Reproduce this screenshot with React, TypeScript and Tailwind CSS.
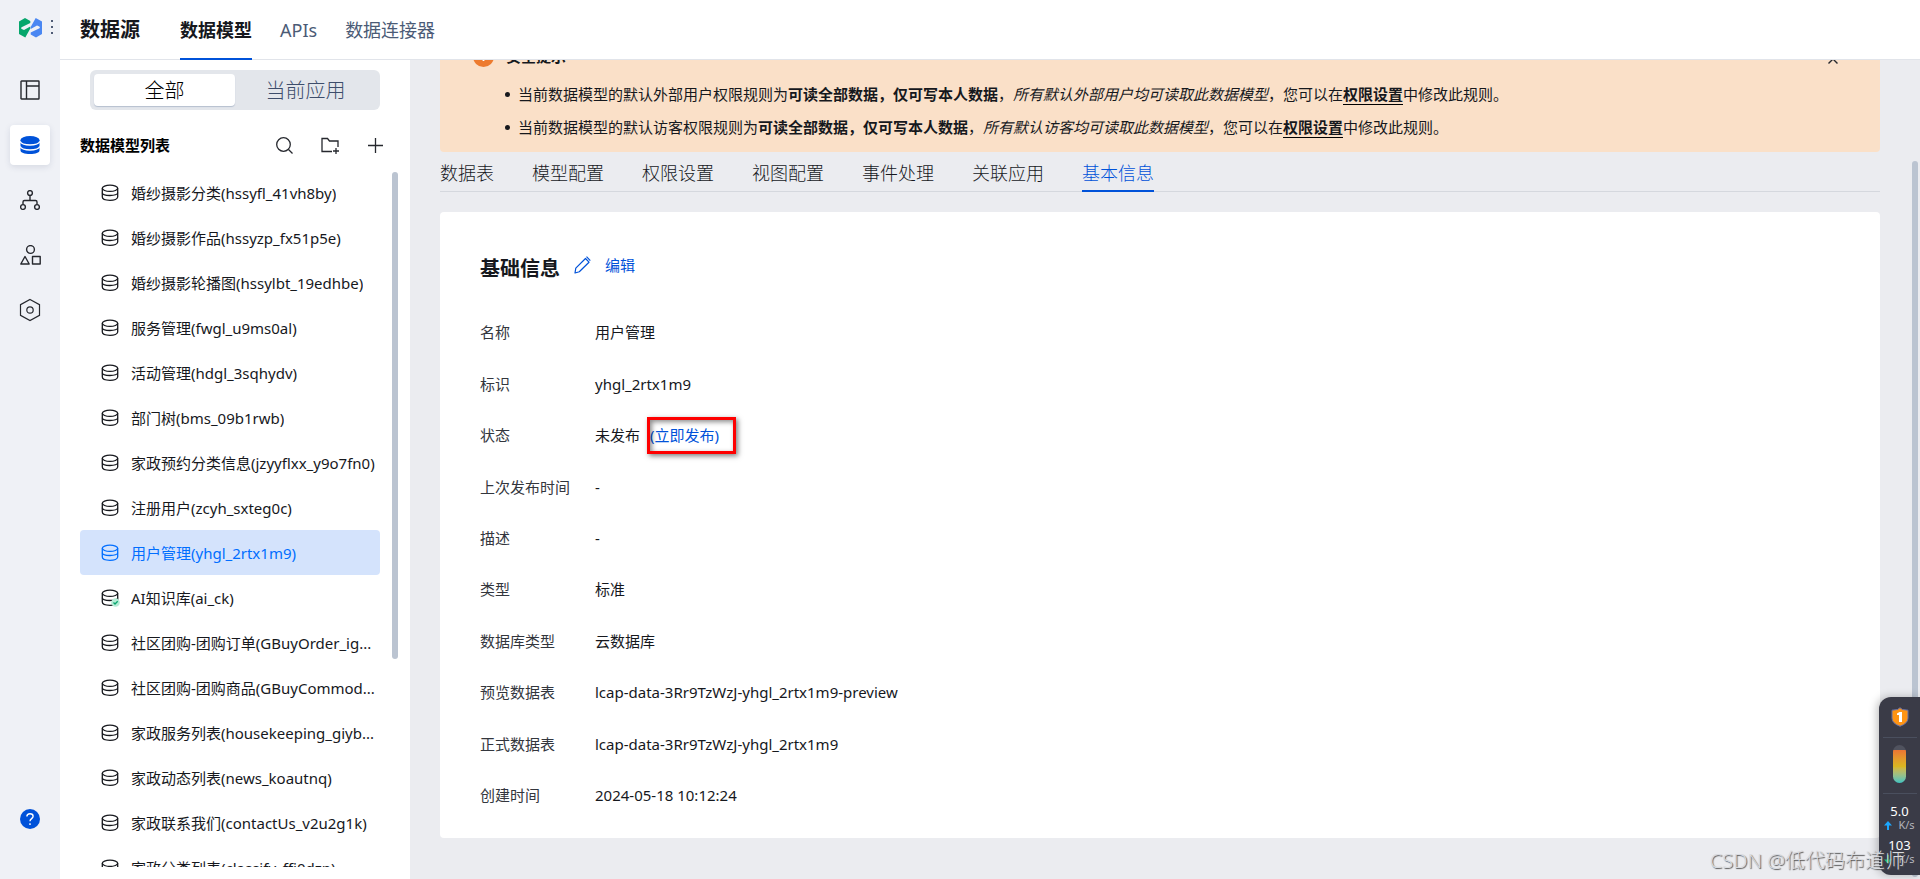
import { useState } from "react";
import type { ReactNode } from "react";
import clsx from "clsx";

type Model = { name: string; published?: boolean };

const models: Model[] = [
  { name: "婚纱摄影分类(hssyfl_41vh8by)" },
  { name: "婚纱摄影作品(hssyzp_fx51p5e)" },
  { name: "婚纱摄影轮播图(hssylbt_19edhbe)" },
  { name: "服务管理(fwgl_u9ms0al)" },
  { name: "活动管理(hdgl_3sqhydv)" },
  { name: "部门树(bms_09b1rwb)" },
  { name: "家政预约分类信息(jzyyflxx_y9o7fn0)" },
  { name: "注册用户(zcyh_sxteg0c)" },
  { name: "用户管理(yhgl_2rtx1m9)" },
  { name: "AI知识库(ai_ck)", published: true },
  { name: "社区团购-团购订单(GBuyOrder_ig..." },
  { name: "社区团购-团购商品(GBuyCommod..." },
  { name: "家政服务列表(housekeeping_giyb..." },
  { name: "家政动态列表(news_koautnq)" },
  { name: "家政联系我们(contactUs_v2u2g1k)" },
  { name: "家政分类列表(classify_ffi0dzn)" },
];

const topTabs = ["数据模型", "APIs", "数据连接器"];
const detailTabs = ["数据表", "模型配置", "权限设置", "视图配置", "事件处理", "关联应用", "基本信息"];

function Logo() {
  return (
    <svg width="24" height="20" viewBox="0 0 24 20">
      <path d="M0 3.500L6 0l5.300 3v2L2.500 9.300q-1 .9.200 1.700L5 12l6.300-3.500v2L6.300 19.500 0 16z" fill="#06a66c" />
      <path d="M23 16l-6 3.500-5.300-3v-2l8.800-4.300q1-.9-.2-1.700L18 7.500 11.700 11V9l5-9L23 3.500z" fill="#4a87f2" />
    </svg>
  );
}

function DatabaseIcon({ published }: { published?: boolean }) {
  return (
    <svg width="19" height="18" viewBox="0 0 19 18" className="shrink-0" fill="none" stroke="currentColor" strokeWidth="1.300">
      <ellipse cx="9" cy="4.300" rx="7.700" ry="3.100" />
      <path d="M1.300 4.300v8.800c0 1.800 3.400 3.200 7.700 3.200s7.700-1.400 7.700-3.200V4.300" />
      <path d="M1.300 8.800c0 1.500 3.400 2.700 7.700 2.700s7.700-1.200 7.700-2.700" />
      {published && (
        <>
          <circle cx="14.500" cy="13.500" r="4.300" fill="#b5ecd6" stroke="none" />
          <path d="M12.500 13.600l1.500 1.400 2.700-2.700" stroke="#07a36c" />
        </>
      )}
    </svg>
  );
}

function RailButton({ label, active, children }: { label: string; active?: boolean; children: ReactNode }) {
  return (
    <button
      aria-label={label}
      className={clsx(
        "flex h-10 w-10 items-center justify-center rounded",
        active ? "bg-white text-[#0052d9] shadow-[0_2px_6px_rgba(30,50,90,0.12)]" : "text-[#26282e]"
      )}
    >
      {children}
    </button>
  );
}

function Rail() {
  return (
    <nav className="flex w-[60px] shrink-0 flex-col items-center bg-[#eff1f6] pb-10">
      <div className="flex h-[70px] w-full shrink-0 items-start gap-2 pl-[19px] pt-[18px]">
        <Logo />
        <svg width="3" height="17" viewBox="0 0 3 17" className="mt-px" fill="#4f5b75">
          <rect y="1" width="2" height="2" />
          <rect y="7" width="2" height="2" />
          <rect y="13" width="2" height="2" />
        </svg>
      </div>
      <div className="flex flex-col gap-[15px]">
        <RailButton label="页面">
          <svg width="20" height="20" viewBox="0 0 20 20" fill="none" stroke="currentColor" strokeWidth="1.400">
            <rect x="1" y="1" width="18" height="18" rx="0.500" />
            <path d="M6.500 1v18M6.500 6H19" />
          </svg>
        </RailButton>
        <RailButton label="数据源" active>
          <svg width="20" height="20" viewBox="0 0 20 20" fill="none">
            <path d="M.5 5v10.500C.5 17.500 4.500 19 10 19s9.500-1.500 9.500-3.500V5z" fill="currentColor" />
            <ellipse cx="10" cy="5" rx="9.500" ry="4" fill="currentColor" />
            <path d="M.2 6.500C1 8.800 5 10 10 10s9-1.200 9.800-3.500M.2 11.500C1 13.800 5 15 10 15s9-1.200 9.800-3.500" stroke="#fff" strokeWidth="1.300" />
          </svg>
        </RailButton>
        <RailButton label="流程">
          <svg width="20" height="20" viewBox="0 0 20 20" fill="none" stroke="currentColor" strokeWidth="1.400">
            <circle cx="10" cy="3" r="2.400" />
            <circle cx="3" cy="17" r="2.400" />
            <circle cx="17" cy="17" r="2.400" />
            <path d="M10 5.400v5.100M3 14.600v-2.600q0-1.500 1.500-1.500h11q1.500 0 1.500 1.500v2.600" />
          </svg>
        </RailButton>
        <RailButton label="组件">
          <svg width="21" height="20" viewBox="0 0 21 20" fill="none" stroke="currentColor" strokeWidth="1.400" strokeLinejoin="round">
            <circle cx="10.500" cy="4.500" r="3.900" />
            <path d="M5 11.500l4.200 7.500H.8z" />
            <rect x="12.500" y="11.500" width="7.700" height="7.500" />
          </svg>
        </RailButton>
        <RailButton label="设置">
          <svg width="22" height="24" viewBox="0 0 22 24" fill="none" stroke="currentColor" strokeWidth="1.200">
            <path d="M11 1.500l9.500 5.200v10.600L11 22.500l-9.500-5.200V6.700z" />
            <circle cx="11" cy="12" r="3.200" />
          </svg>
        </RailButton>
      </div>
      <button aria-label="帮助" className="mt-auto flex h-10 w-10 items-center justify-center">
        <svg width="20" height="20" viewBox="0 0 20 20" fill="none" stroke="#fff" strokeWidth="1.400">
          <circle cx="10" cy="10" r="10" fill="#0052d9" stroke="none" />
          <path d="M6.900 7.600c0-1.800 1.300-2.900 3.100-2.900s3.100 1 3.100 2.600c0 2.300-3.100 2.400-3.100 5M10 14.200v1.800" />
        </svg>
      </button>
    </nav>
  );
}

function Sidebar() {
  const [scope, setScope] = useState("全部");
  const [selected, setSelected] = useState(8);

  return (
    <aside className="relative flex w-[350px] shrink-0 flex-col bg-white pb-3">
      <div className="mx-[30px] mt-[10px] flex h-10 w-[290px] shrink-0 rounded-md bg-[#e3e6eb] p-1 text-[20px] font-light leading-8">
        {["全部", "当前应用"].map((s) => (
          <button
            key={s}
            onClick={() => setScope(s)}
            className={clsx(
              "flex-1 rounded-sm pt-px",
              scope === s ? "bg-white text-black shadow-[0_1px_1px_#b5bfcf]" : "text-[#3d4d6b]"
            )}
          >
            {s}
          </button>
        ))}
      </div>

      <div className="flex h-[60px] shrink-0 items-center pl-5 pr-[27px] pt-[10px]">
        <h2 className="flex-1 text-[15px] font-bold text-black">数据模型列表</h2>
        <div className="flex items-center gap-7 text-[#26282e]">
          <button aria-label="搜索">
            <svg width="17" height="17" viewBox="0 0 17 17" fill="none" stroke="currentColor" strokeWidth="1.300">
              <circle cx="7.500" cy="7.500" r="6.800" />
              <path d="M12.500 12.500l4 4" />
            </svg>
          </button>
          <button aria-label="新建分组">
            <svg width="19" height="17" viewBox="0 0 19 17" fill="none" stroke="currentColor" strokeWidth="1.300">
              <path d="M11 14.500H1V1.500h5.500l2 2.500h8.500v6" />
              <path d="M15 11v6M12 14h6" />
            </svg>
          </button>
          <button aria-label="新建数据模型">
            <svg width="15" height="15" viewBox="0 0 15 15" stroke="currentColor" strokeWidth="1.300">
              <path d="M7.500 0v15M0 7.500h15" />
            </svg>
          </button>
        </div>
      </div>

      <ul className="min-h-0 flex-1 overflow-hidden px-5 pr-[30px] text-[15px]">
        {models.map((m, i) => (
          <li key={m.name}>
            <button
              onClick={() => setSelected(i)}
              className={clsx(
                "flex h-[45px] w-full items-center gap-[11px] rounded pl-[21px] pt-px text-left",
                selected === i ? "bg-[#d4e3fc] text-[#006eff]" : "text-[#16181d]"
              )}
            >
              <DatabaseIcon published={m.published} />
              <span className="min-w-0 truncate">{m.name}</span>
            </button>
          </li>
        ))}
      </ul>
      <div className="absolute right-3 top-[112px] h-[487px] w-[6px] rounded-full bg-[#bbc4d1]" />
    </aside>
  );
}

function Notice() {
  return (
    <section className="relative h-[130px] shrink-0 rounded bg-[#fae0c8] pl-[33px] text-[15px] text-[#16181d]">
      <div className="flex items-center gap-3 pt-6">
        <svg width="21" height="21" viewBox="0 0 21 21">
          <circle cx="10.500" cy="10.500" r="10.500" fill="#ed7b2f" />
          <path d="M10.500 5v6.500M10.500 13.500v1.500" stroke="#fff" strokeWidth="1.800" />
        </svg>
        <h3 className="font-bold leading-[21px]">安全提示</h3>
      </div>
      <ul className="ml-8 mt-[11px] leading-[33px]">
        <li className="flex items-center gap-2">
          <span className="h-[5px] w-[5px] rounded-full bg-[#16181d]" />
          <p>
            当前数据模型的默认外部用户权限规则为<b>可读全部数据，仅可写本人数据</b>，
            <i>所有默认外部用户均可读取此数据模型</i>，您可以在
            <a href="#permission" className="border-b border-black font-bold">权限设置</a>中修改此规则。
          </p>
        </li>
        <li className="flex items-center gap-2">
          <span className="h-[5px] w-[5px] rounded-full bg-[#16181d]" />
          <p>
            当前数据模型的默认访客权限规则为<b>可读全部数据，仅可写本人数据</b>，
            <i>所有默认访客均可读取此数据模型</i>，您可以在
            <a href="#permission" className="border-b border-black font-bold">权限设置</a>中修改此规则。
          </p>
        </li>
      </ul>
      <button aria-label="关闭" className="absolute right-[42px] top-8">
        <svg width="10" height="10" viewBox="0 0 10 10" stroke="#26282e" strokeWidth="1.400">
          <path d="M.5.5l9 9M9.500.5l-9 9" />
        </svg>
      </button>
    </section>
  );
}

function Row({ label, children }: { label: string; children: ReactNode }) {
  return (
    <div className="flex items-center">
      <dt className="w-[115px] shrink-0 text-[#33363d]">{label}</dt>
      <dd className="text-[#16181d]">{children}</dd>
    </div>
  );
}

function BasicInfo() {
  return (
    <section className="mt-5 rounded bg-white px-10 pb-[17px] pt-10 text-[15px]">
      <div className="flex h-8 items-center">
        <h2 className="pt-px text-[20px] font-bold text-[#16181d]">基础信息</h2>
        <button className="ml-[14px] flex items-center gap-[14px] pb-[6px] text-[#0052d9]">
          <svg width="17" height="18" viewBox="0 0 17 18" fill="none" stroke="currentColor" strokeWidth="1.200" strokeLinejoin="round">
            <path d="M1 17l.8-4.800L11.500 2.500l3.500 3.700-9.700 9.500zM12.500.7l3.800 3.900" />
          </svg>
          编辑
        </button>
      </div>
      <dl className="mt-[23px] grid min-h-[514px] auto-rows-fr">
        <Row label="名称">用户管理</Row>
        <Row label="标识">yhgl_2rtx1m9</Row>
        <Row label="状态">
          未发布
          <span className="relative ml-[10px]">
            <a href="#publish" className="text-[#0052d9]">(立即发布)</a>
            <span className="pointer-events-none absolute -left-[3px] -top-2 h-[37px] w-[89px] border-3 border-[#fe0000] shadow-[2px_2px_5px_rgba(0,0,0,0.5),inset_2px_2px_5px_rgba(0,0,0,0.45)]" />
          </span>
        </Row>
        <Row label="上次发布时间">-</Row>
        <Row label="描述">-</Row>
        <Row label="类型">标准</Row>
        <Row label="数据库类型">云数据库</Row>
        <Row label="预览数据表">lcap-data-3Rr9TzWzJ-yhgl_2rtx1m9-preview</Row>
        <Row label="正式数据表">lcap-data-3Rr9TzWzJ-yhgl_2rtx1m9</Row>
        <Row label="创建时间">2024-05-18 10:12:24</Row>
      </dl>
    </section>
  );
}

// floating system monitor docked to the window's right edge
function Monitor() {
  return (
    <div className="absolute bottom-1 right-0 flex h-[178px] w-[41px] flex-col items-center rounded-l-xl bg-[#3a3b47] text-white shadow-[-2px_0_8px_rgba(0,0,0,0.25)]">
      <svg width="18" height="20" viewBox="0 0 18 20" className="mt-[10px]">
        <path d="M9 .7l2.500 1.800 5.500.7v8q0 5-8 8.100-8-3.100-8-8.100v-8l5.500-.7z" fill="#ff9413" stroke="#6670a8" />
        <path d="M6 6.500l2.500-1.500H11v10H8V8H6z" fill="#fff" />
      </svg>
      <div className="mt-[10px] h-px w-[34px] bg-[#4a4f5e]" />
      <div className="mt-[7px] h-[38px] w-[13px] overflow-hidden rounded-full bg-[#50525e] pt-[5px]">
        <div className="h-full bg-linear-to-b from-[#ea7433] via-[#d9b620] to-[#34c3c0]" />
      </div>
      <div className="mt-[10px] h-px w-[34px] bg-[#4a4f5e]" />
      <div className="mt-2 text-[13px] leading-[18px]">5.0</div>
      <div className="flex items-center gap-[6px] text-[11px] leading-[10px] text-[#b4b5bc]">
        <svg width="8" height="9" viewBox="0 0 8 9" fill="#1ba7ff">
          <path d="M4 0l4 4.500H5V9H3V4.500H0z" />
        </svg>
        K/s
      </div>
      <div className="mt-[6px] text-[13px] leading-[18px]">103</div>
      <div className="flex items-center gap-[6px] text-[11px] leading-[10px] text-[#b4b5bc]">
        <svg width="8" height="9" viewBox="0 0 8 9" fill="#23c06a">
          <path d="M4 9l4-4.500H5V0H3v4.500H0z" />
        </svg>
        K/s
      </div>
    </div>
  );
}

export default function App() {
  const [tab, setTab] = useState("基本信息");

  return (
    <div className="relative flex h-screen overflow-hidden bg-[#ebecf0] font-['Noto_Sans','Noto_Sans_CJK_SC',sans-serif]">
      <Rail />
      <div className="flex min-w-0 flex-1 flex-col">
        <header className="flex h-[60px] shrink-0 items-stretch border-b border-[#e1e4ea] bg-white pl-5">
          <h1 className="self-center pt-px text-[20px] font-bold text-[#16181d]">数据源</h1>
          <nav className="-mb-px ml-10 flex gap-7 text-[18px]">
            {topTabs.map((t, i) => (
              <button
                key={t}
                className={clsx(
                  "border-b-2 pt-[3px]",
                  i === 0 ? "border-[#0052d9] font-bold text-[#16181d]" : "border-transparent text-[#4b5b76]"
                )}
              >
                {t}
              </button>
            ))}
          </nav>
        </header>

        <div className="flex min-h-0 flex-1">
          <Sidebar />
          <main className="flex min-w-0 flex-1 flex-col overflow-hidden px-[30px] pr-10">
            {/* scrolled a little: the top of the notice sits under the header */}
            <div className="-mt-[38px]">
              <Notice />
              <div className="flex h-10 gap-[38px] border-b border-[#d5d8de] text-[18px] font-light">
                {detailTabs.map((t) => (
                  <button
                    key={t}
                    onClick={() => setTab(t)}
                    className={clsx(
                      "-mb-px border-b-2 pt-1",
                      tab === t ? "border-[#0052d9] text-[#0052d9]" : "border-transparent text-[#16181d]"
                    )}
                  >
                    {t}
                  </button>
                ))}
              </div>
              <BasicInfo />
            </div>
          </main>
        </div>
      </div>

      <div className="absolute bottom-[2px] right-[2px] top-[161px] w-[6px] rounded-full bg-[#bbc4d1]" />
      <Monitor />
      <div className="pointer-events-none absolute bottom-[3px] right-[15px] text-[20px] font-light leading-[30px] text-[#d9dbe0] [text-shadow:1px_1px_1px_#555]">
        CSDN @低代码布道师
      </div>
    </div>
  );
}
